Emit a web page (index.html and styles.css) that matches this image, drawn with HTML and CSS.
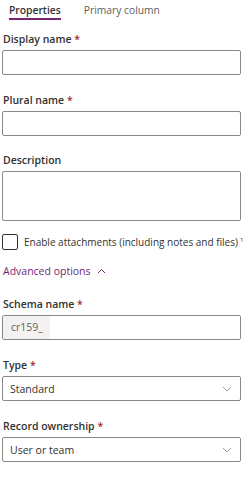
FILE: index.html
```html
<!DOCTYPE html>
<html lang="en">
<head>
    <meta charset="UTF-8">
    <meta name="viewport" content="width=device-width, initial-scale=1.0">
    <title>New table</title>
    <link rel="stylesheet" href="styles.css">
</head>
<body>
    <div class="tabs">
        <div class="tab active">Properties</div>
        <div class="tab">Primary column</div>
    </div>

    <div class="form">
        <label class="label first">Display name <span class="req">*</span></label>
        <div class="field"></div>

        <label class="label">Plural name <span class="req">*</span></label>
        <div class="field"></div>

        <label class="label small-gap">Description</label>
        <div class="field area"></div>

        <div class="check-row">
            <span class="checkbox"></span>
            <span class="check-text">Enable attachments (including notes and files)<sup>1</sup></span>
        </div>

        <div class="advanced">
            Advanced options
            <svg width="9" height="6" viewBox="0 0 9 6"><path d="M1 5 L4.5 1.5 L8 5" fill="none" stroke="#742774" stroke-width="1"/></svg>
        </div>

        <label class="label">Schema name <span class="req">*</span></label>
        <div class="field schema">
            <span class="prefix">cr159_</span>
        </div>

        <label class="label">Type <span class="req">*</span></label>
        <div class="field select">
            <span>Standard</span>
            <svg width="10" height="6" viewBox="0 0 10 6"><path d="M1 1 L5 5 L9 1" fill="none" stroke="#a19f9d" stroke-width="1"/></svg>
        </div>

        <label class="label">Record ownership <span class="req">*</span></label>
        <div class="field select">
            <span>User or team</span>
            <svg width="10" height="6" viewBox="0 0 10 6"><path d="M1 1 L5 5 L9 1" fill="none" stroke="#a19f9d" stroke-width="1"/></svg>
        </div>
    </div>
</body>
</html>
```

FILE: styles.css
```css
body {
    font-family: "Open Sans", "Noto Sans", sans-serif;
    font-size: 10.5px;
    background-color: #ffffff;
    margin: 0;
    padding: 0;
    color: #323130;
}

.tabs {
    display: flex;
    gap: 23px;
    padding-left: 9px;
    margin-top: 2px;
}

.tab {
    line-height: 16px;
    font-size: 10.3px;
    color: #605e5c;
    border-bottom: 2px solid transparent;
}

.tab.active {
    font-weight: 600;
    color: #323130;
    border-bottom-color: #742774;
}

.form {
    display: flex;
    flex-direction: column;
    padding-left: 2px;
    width: 239px;
}

.label {
    display: block;
    line-height: 16px;
    font-weight: 600;
    padding-left: 1px;
    margin-top: 17px;
    margin-bottom: 3px;
}

.label.first {
    margin-top: 11px;
}

.label.small-gap {
    margin-top: 16px;
}

.req {
    color: #a4262c;
    font-weight: 600;
}

.field {
    height: 25px;
    box-sizing: border-box;
    border: 1px solid #8a8886;
    border-radius: 2px;
    background: #fff;
}

.field.area {
    height: 50px;
}

.check-row {
    display: flex;
    align-items: center;
    gap: 6px;
    margin-top: 13px;
    height: 16px;
}

.checkbox {
    width: 16px;
    height: 16px;
    box-sizing: border-box;
    border: 1px solid #323130;
    border-radius: 2px;
    flex-shrink: 0;
}

.check-text {
    white-space: nowrap;
    font-size: 10px;
    color: #323130;
}

.check-text sup {
    font-size: 6px;
    margin-left: 2px;
}

.advanced {
    display: flex;
    align-items: center;
    gap: 6px;
    margin-top: 13px;
    line-height: 16px;
    color: #742774;
    padding-left: 1px;
}

.schema {
    display: flex;
    overflow: hidden;
}

.prefix {
    background: #f3f2f1;
    color: #605e5c;
    padding: 0 7px 0 8px;
    line-height: 23px;
    width: 47px;
    box-sizing: border-box;
}

.select {
    display: flex;
    align-items: center;
    justify-content: space-between;
    padding: 0 8px 0 7px;
}
```
